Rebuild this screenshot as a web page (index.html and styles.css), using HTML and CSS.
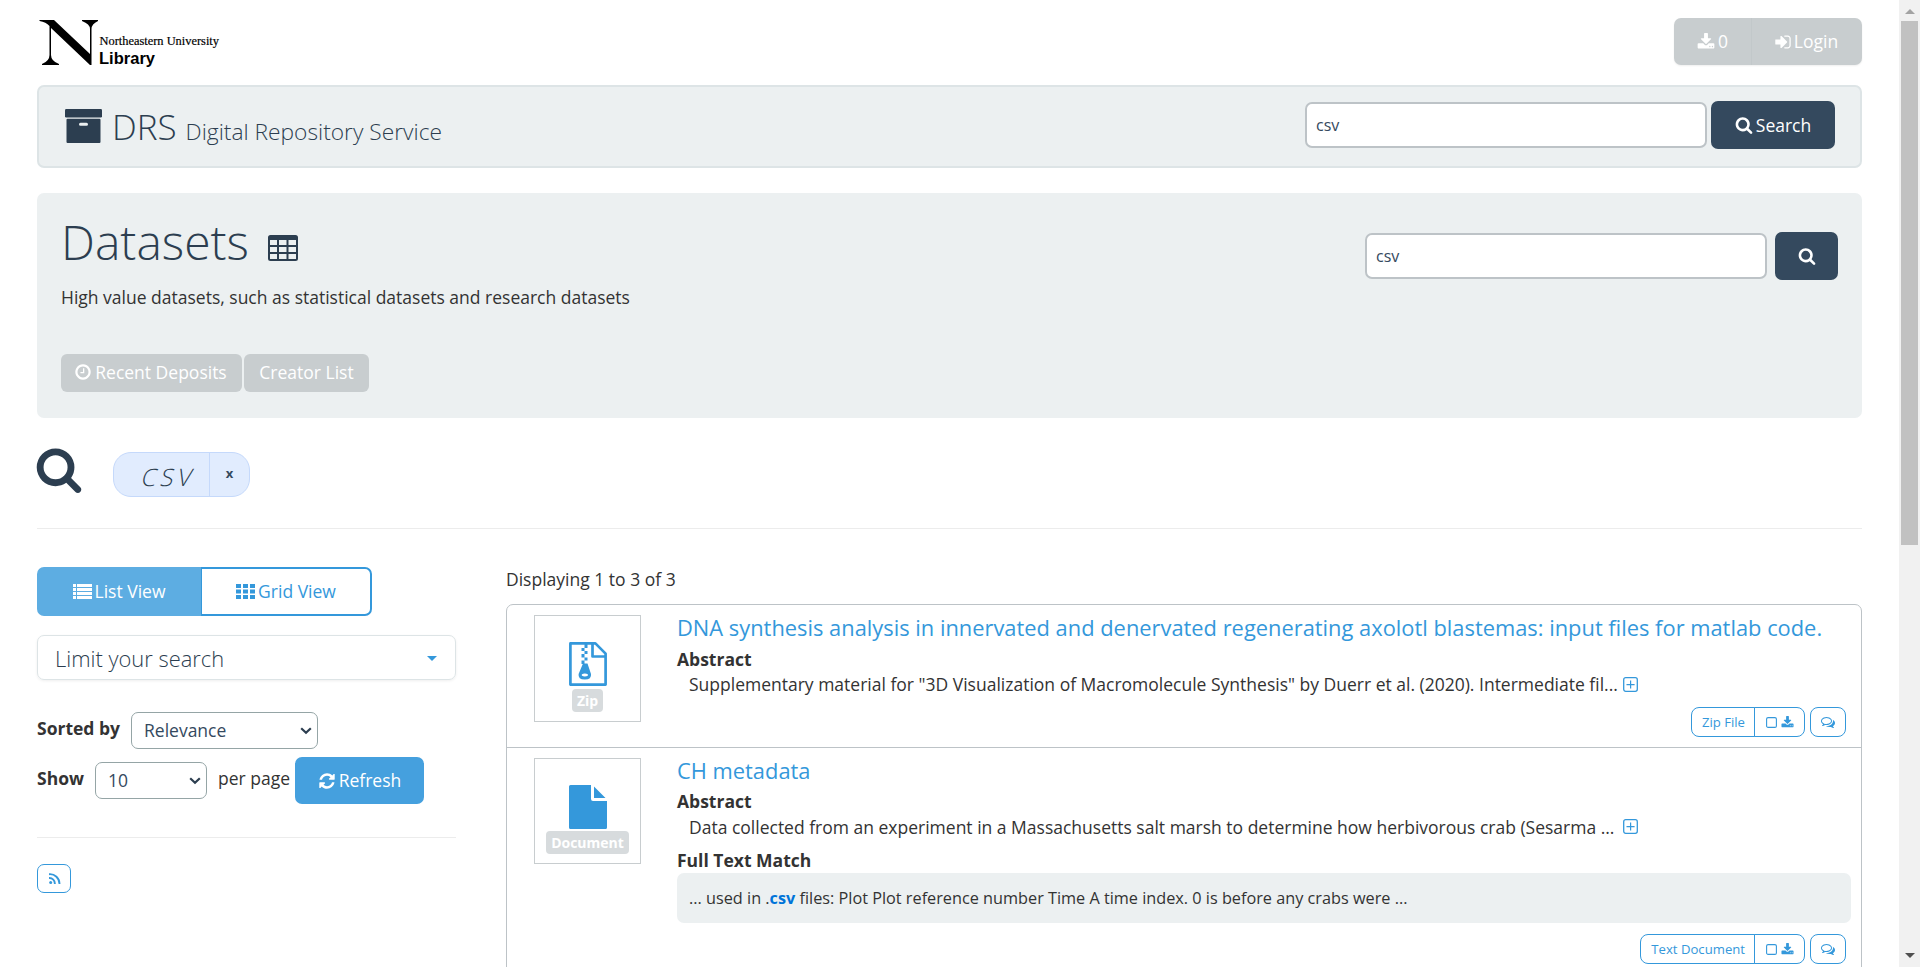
FILE: index.html
```html
<!DOCTYPE html>
<html lang="en">
<head>
<meta charset="utf-8">
<title>Datasets - DRS</title>
<link rel="stylesheet" href="styles.css">
</head>
<body>
<svg class="defs" width="0" height="0">
  <symbol id="search" viewBox="0 0 1792 1792"><path d="M1216 832q0-185-131.500-316.500t-316.500-131.500-316.500 131.500-131.500 316.500 131.500 316.500 316.500 131.500 316.500-131.500 131.500-316.500zm512 832q0 52-38 90t-90 38q-54 0-90-38l-343-342q-179 124-399 124-143 0-273.500-55.500t-225-150-150-225-55.500-273.500 55.500-273.500 150-225 225-150 273.500-55.500 273.500 55.500 225 150 150 225 55.500 273.500q0 220-124 399l343 343q37 37 37 90z"/></symbol>
  <symbol id="download" viewBox="0 0 1792 1792"><path d="M1344 1344q0-26-19-45t-45-19-45 19-19 45 19 45 45 19 45-19 19-45zm256 0q0-26-19-45t-45-19-45 19-19 45 19 45 45 19 45-19 19-45zm128-224v320q0 40-28 68t-68 28h-1472q-40 0-68-28t-28-68v-320q0-40 28-68t68-28h465l135 136q58 56 136 56t136-56l136-136h464q40 0 68 28t28 68zm-325-569q17 41-14 70l-448 448q-18 19-45 19t-45-19l-448-448q-31-29-14-70 17-39 59-39h256v-448q0-26 19-45t45-19h256q26 0 45 19t19 45v448h256q42 0 59 39z"/></symbol>
  <symbol id="signin" viewBox="0 0 1792 1792"><path d="M1312 896q0 26-19 45l-544 544q-19 19-45 19t-45-19-19-45v-288h-448q-26 0-45-19t-19-45v-384q0-26 19-45t45-19h448v-288q0-26 19-45t45-19 45 19l544 544q19 19 19 45zm352-352v704q0 119-84.500 203.500t-203.500 84.500h-320q-13 0-22.500-9.500t-9.500-22.500q0-4-1-20t-.5-26.500 3-23.500 10-19.500 20.500-6.500h320q66 0 113-47t47-113v-704q0-66-47-113t-113-47h-312l-11.500-1-11.500-3-8-5.500-7-9-2-13.500q0-4-1-20t-.5-26.500 3-23.500 10-19.500 20.500-6.500h320q119 0 203.500 84.500t84.500 203.500z"/></symbol>
  <symbol id="clock" viewBox="0 0 1792 1792"><path d="M1024 544v448q0 14-9 23t-23 9h-320q-14 0-23-9t-9-23v-64q0-14 9-23t23-9h224v-352q0-14 9-23t23-9h64q14 0 23 9t9 23zm416 352q0-148-73-273t-198-198-273-73-273 73-198 198-73 273 73 273 198 198 273 73 273-73 198-198 73-273zm224 0q0 209-103 385.500t-279.500 279.500-385.500 103-385.500-103-279.500-279.500-103-385.500 103-385.500 279.500-279.500 385.500-103 385.500 103 279.500 279.500 103 385.500z"/></symbol>
  <symbol id="refresh" viewBox="0 0 1792 1792"><path d="M1639 1056q0 5-1 7-64 268-268 434.500t-478 166.500q-146 0-282.500-55t-243.500-157l-129 129q-19 19-45 19t-45-19-19-45v-448q0-26 19-45t45-19h448q26 0 45 19t19 45-19 45l-137 137q71 66 161 102t187 36q134 0 250-65t186-179q11-17 53-117 8-23 30-23h192q13 0 22.500 9.500t9.500 22.500zm25-800v448q0 26-19 45t-45 19h-448q-26 0-45-19t-19-45 19-45l138-138q-148-137-349-137-134 0-250 65t-186 179q-11 17-53 117-8 23-30 23h-199q-13 0-22.500-9.500t-9.500-22.500v-7q65-268 270-434.500t480-166.500q146 0 284 55.500t245 156.500l130-129q19-19 45-19t45 19 19 45z"/></symbol>
  <symbol id="comments" viewBox="0 0 1792 1792"><path d="M704 384q-153 0-286 52t-211.500 141-78.500 191q0 82 53 158t149 132l97 56-35 84q34-20 62-39l44-31 53 10q78 14 153 14 153 0 286-52t211.500-141 78.500-191-78.500-191-211.500-141-286-52zm0-128q191 0 353.500 68.500t256.500 186.500 94 257-94 257-256.500 186.500-353.500 68.500q-86 0-176-16-124 88-278 128-36 9-86 16h-3q-11 0-20.500-8t-11.500-21q-1-3-1-6.500t.5-6.500 2-6l2.500-5 3.500-5.500 4-5 4.500-5 4-4.500q5-6 23-25t26-29.500 22.500-29 25-38.500 20.500-44q-124-72-195-177t-71-224q0-139 94-257t256.500-186.500 353.500-68.500zm822 1169q10 24 20.500 44t25 38.500 22.500 29 26 29.500 23 25q1 1 4 4.500t4.500 5 4 5 3.500 5.500l2.500 5 2 6 .5 6.500-1 6.500q-3 14-13 22t-22 7q-50-7-86-16-154-40-278-128-90 16-176 16-271 0-472-132 58 4 88 4 161 0 309-45t264-129q125-92 192-212t67-254q0-77-23-152 129 71 204 178t75 230q0 120-71 224.500t-195 176.500z"/></symbol>
  <symbol id="box" viewBox="0 0 11 13"><rect x=".6" y="1.600" width="9.800" height="9.800" rx="1.500" fill="none" stroke="currentColor" stroke-width="1.100"/></symbol>
  <symbol id="plus" viewBox="0 0 15 15"><rect x=".7" y=".7" width="13.600" height="13.600" rx="2" fill="none" stroke="currentColor" stroke-width="1.300"/><path d="M7 3.500h1.200V7h3.400v1.200H8.200v3.400H7V8.200H3.500V7H7z"/></symbol>
</svg>
<div class="page">
  <header class="top">
    <svg class="logo" width="190" height="50" viewBox="0 0 190 50" role="img" aria-label="Northeastern University Library">
      <path d="M2.500 2H17L53 36V11Q53 6 45 3V2H61V3Q54.500 6 54.500 11V47H53L14 10V37Q14 43 22 46V47H5V46Q12.500 43 12.500 37V8Q9 4 2.500 3z"/>
      <text class="logo-uni" x="62.500" y="27" textLength="119.500" lengthAdjust="spacingAndGlyphs">Northeastern University</text>
      <text class="logo-lib" x="62" y="46" textLength="56" lengthAdjust="spacingAndGlyphs">Library</text>
    </svg>
    <div class="account">
      <a class="acc-count"><svg class="i18"><use href="#download"/></svg>0</a>
      <a class="acc-login"><svg class="i18"><use href="#signin"/></svg>Login</a>
    </div>
  </header>

  <nav class="brandbar">
    <svg class="archive" width="37" height="34" viewBox="0 0 37 34"><rect width="37" height="8.500" rx="1.300"/><path fill-rule="evenodd" d="M2.500 9.800h32q1 0 1 1v22q0 1.200-1 1.200h-32q-1 0-1-1.200v-22q0-1 1-1zM15.500 13.700a1.500 1.500 0 0 0 0 3h6a1.500 1.500 0 0 0 0-3z"/></svg>
    <span class="drs">DRS</span><span class="drs-sub">Digital Repository Service</span>
    <form class="bar-search"><input class="field" value="csv"><button class="dark" type="button"><svg class="i18"><use href="#search"/></svg>Search</button></form>
  </nav>

  <section class="hero">
    <div class="hero-main">
      <h1 class="hero-title">Datasets
        <svg class="table-icon" width="30" height="26" viewBox="0 0 30 26"><path fill-rule="evenodd" d="M2.500 0h25q2.500 0 2.500 2.500v21q0 2.500-2.500 2.500h-25Q0 26 0 23.500v-21Q0 0 2.500 0zM2 5v5h7V5zM11 5v5h7.500V5zM20.500 5v5H28V5zM2 12v5h7v-5zM11 12v5h7.500v-5zM20.500 12v5H28v-5zM2 19v5h7v-5zM11 19v5h7.500v-5zM20.500 19v5H28v-5z"/></svg>
      </h1>
      <p class="hero-text">High value datasets, such as statistical datasets and research datasets</p>
      <div class="hero-links"><a class="grey recent"><svg class="i18"><use href="#clock"/></svg>Recent Deposits</a><a class="grey creator">Creator List</a></div>
    </div>
    <form class="hero-search"><input class="field" value="csv"><button class="dark square" type="button" aria-label="Search"><svg class="i18"><use href="#search"/></svg></button></form>
  </section>

  <div class="query">
    <svg class="big-search"><use href="#search"/></svg>
    <div class="pill"><span class="term"><span class="slant">CSV</span></span><a class="remove">x</a></div>
  </div>

  <div class="columns">
    <aside class="side">
      <div class="views">
        <a class="view list"><svg width="19" height="15" viewBox="0 0 19 15"><path d="M0 0h3v3H0zM4 0h15v3H4zM0 4h3v3H0zM4 4h15v3H4zM0 8h3v3H0zM4 8h15v3H4zM0 12h3v3H0zM4 12h15v3H4z"/></svg>List View</a>
        <a class="view grid"><svg width="19" height="15" viewBox="0 0 19 15"><path d="M0 0h5v4H0zM7 0h5v4H7zM14 0h5v4h-5zM0 5.500h5v4H0zM7 5.500h5v4H7zM14 5.500h5v4h-5zM0 11h5v4H0zM7 11h5v4H7zM14 11h5v4h-5z"/></svg>Grid View</a>
      </div>
      <div class="limit">Limit your search<span class="caret"></span></div>
      <div class="sort"><b class="lbl">Sorted by</b><span class="select sel-a">Relevance<svg width="12" height="8" viewBox="0 0 12 8"><path d="M1.200 1.200L6 5.800l4.800-4.600"/></svg></span></div>
      <div class="show"><b class="lbl">Show</b><span class="select sel-b">10<svg width="12" height="8" viewBox="0 0 12 8"><path d="M1.200 1.200L6 5.800l4.800-4.600"/></svg></span><span class="per">per page</span><a class="refresh"><svg class="i18"><use href="#refresh"/></svg>Refresh</a></div>
      <div class="feed"><a class="rss"><svg width="12" height="11" viewBox="0 0 12 11"><circle cx="1.700" cy="9.400" r="1.500"/><path d="M0 5A5.500 5.500 0 0 1 5.800 11M0 1.200A9.600 9.600 0 0 1 10.500 11" fill="none" stroke="currentColor" stroke-width="1.900"/></svg></a></div>
    </aside>

    <main class="results">
      <p class="count">Displaying 1 to 3 of 3</p>
      <div class="list-box">
        <article class="item first">
          <div class="thumb">
            <svg width="38" height="44" viewBox="0 0 38 44"><path d="M1.400 1.400h25l10.200 10.200v31H1.400zM23.500 1.500v13h13" fill="none" stroke="currentColor" stroke-width="2.700" stroke-linejoin="round"/><path d="M15.500 2h3v4h-3zM12.500 6h3v3h-3zM15.500 9h3v3h-3zM12.500 12h3v3.500h-3zM15.500 15.500h3v3h-3zM12.500 18.500h3V22h-3z"/><path fill-rule="evenodd" d="M14 21.500h4.500L22 32q.8 5.500-6.200 5.500T9.600 32zM15.800 31.500a3.200 1.500 0 1 0 .1 0z"/></svg>
            <span class="kind">Zip</span>
          </div>
          <div class="info">
            <h2 class="title">DNA synthesis analysis in innervated and denervated regenerating axolotl blastemas: input files for matlab code.</h2>
            <b class="head">Abstract</b>
            <p class="text">Supplementary material for "3D Visualization of Macromolecule Synthesis" by Duerr et al. (2020). Intermediate fil...<svg class="plus"><use href="#plus"/></svg></p>
            <div class="actions"><a class="mini left">Zip File</a><a class="mini right"><svg class="i-box"><use href="#box"/></svg><svg class="i13"><use href="#download"/></svg></a><a class="mini chat"><svg class="i14"><use href="#comments"/></svg></a></div>
          </div>
        </article>
        <article class="item second">
          <div class="thumb">
            <svg width="38" height="44" viewBox="0 0 38 44"><path d="M1.500 0H22v14q0 2 2 2h14v26.500q0 1.500-1.500 1.500h-35Q0 44 0 42.500v-41Q0 0 1.500 0zM25 1.500L36.500 13H25z"/></svg>
            <span class="kind">Document</span>
          </div>
          <div class="info">
            <h2 class="title">CH metadata</h2>
            <b class="head">Abstract</b>
            <p class="text">Data collected from an experiment in a Massachusetts salt marsh to determine how herbivorous crab (Sesarma ...<svg class="plus"><use href="#plus"/></svg></p>
            <b class="head">Full Text Match</b>
            <div class="match">... used in .<b class="hit">csv</b> files: Plot Plot reference number Time A time index. 0 is before any crabs were ...</div>
            <div class="actions"><a class="mini left">Text Document</a><a class="mini right"><svg class="i-box"><use href="#box"/></svg><svg class="i13"><use href="#download"/></svg></a><a class="mini chat"><svg class="i14"><use href="#comments"/></svg></a></div>
          </div>
        </article>
      </div>
    </main>
  </div>
</div>
<div class="scrollbar"><span class="up"></span><span class="track"></span><span class="down"></span></div>
</body>
</html>
```
FILE: styles.css
```css
* { box-sizing: border-box; }
html, body { height: 100%; }
body { margin: 0; display: flex; height: 967px; overflow: hidden; background: #fff; color: #333; font: 17.5px/25px "Open Sans", sans-serif; }
svg { fill: currentColor; flex: none; }
h1, h2, p { margin: 0; font-weight: normal; }
.defs { position: absolute; }
.i18 { width: 18px; height: 18px; margin-right: 3px; }
.i13 { width: 13px; height: 13px; }
.i-box { width: 11px; height: 13px; }
.i14 { width: 14px; height: 14px; }
.page { flex: 1; height: 967px; overflow: hidden; padding: 0 37px; }

.top { display: flex; justify-content: space-between; align-items: flex-start; height: 85px; padding-top: 18px; }
.logo { color: #000; }
.logo-uni { font: 12.5px "Liberation Serif", serif; stroke: #000; stroke-width: .2px; }
.logo-lib { font: bold 17px "Liberation Sans", sans-serif; }
.account { display: flex; height: 47px; width: 188px; border-radius: 7px; background: #c8cdcf; color: #fff; box-shadow: 0 1px 2px #0001; }
.account a { display: flex; align-items: center; justify-content: center; }
.acc-count { width: 78px; border-right: 1px solid #c2c8ca; }
.acc-login { flex: 1; padding-right: 2px; }
.acc-login .i18 { margin-right: 2px; }

.brandbar { display: flex; align-items: center; height: 83px; padding: 0 25px 3px 26px; border: 2px solid #dde4e6; border-radius: 7px; background: #ecf0f1; color: #2c3e50; }
.archive { margin-top: 2px; }
.drs { margin: 3px 0 0 10px; font-size: 35px; font-weight: 300; }
.drs-sub { margin: 12px 0 0 9px; font-size: 22.75px; font-weight: 300; }
.bar-search { display: flex; align-items: flex-start; gap: 4px; margin-left: auto; }
.field { width: 402px; height: 46px; margin-top: 1px; padding: 0 9px 1px; border: 2px solid #bdc3c7; border-radius: 7px; background: #fff; color: #34495e; font: 16px "Open Sans", sans-serif; }
.dark { display: flex; align-items: center; justify-content: center; width: 124px; height: 48px; padding: 0; border: 0; border-radius: 7px; background: #34495e; color: #fff; font: 17.5px "Open Sans", sans-serif; }
.square { width: 63px; }
.square .i18 { margin: 0; }

.hero { display: flex; justify-content: space-between; height: 225px; margin-top: 25px; padding: 23px 24px 0; border-radius: 7px; background: #ecf0f1; }
.hero-title { display: flex; align-items: center; height: 52px; gap: 19px; color: #2c3e50; font-size: 48px; font-weight: 300; line-height: 52px; }
.table-icon { margin-top: 12px; }
.hero-text { margin-top: 17px; }
.hero-links { display: flex; gap: 2px; margin-top: 44px; }
.grey { display: flex; align-items: center; justify-content: center; height: 38px; padding-bottom: 2px; border-radius: 6px; background: #c8cdcf; color: #fff; }
.recent { width: 181px; padding-right: 2px; }
.creator { width: 125px; }
.hero-search { display: flex; align-items: flex-start; gap: 8px; height: 48px; margin-top: 16px; }

.query { display: flex; align-items: flex-start; gap: 30px; height: 111px; padding-top: 30px; border-bottom: 1px solid #ececec; }
.big-search { width: 48px; height: 48px; margin: -3px 0 0 -2px; color: #2c3e50; }
.pill { display: flex; width: 137px; height: 45px; margin-top: 4px; border: 1px solid #c5d9fb; border-radius: 18px; background: #e1ecfe; }
.term { width: 96px; padding: 8px 0 0 26px; border-right: 1px solid #c5d9fb; color: #2c3e50; font-size: 24px; font-weight: 300; line-height: 32px; letter-spacing: 4px; }
.slant { display: block; transform: skewX(-14deg); transform-origin: 0 25px; }
.remove { flex: 1; padding-top: 8px; color: #34495e; font-size: 13px; font-weight: bold; text-align: center; }

.columns { display: flex; gap: 50px; }
.side { width: 419px; padding-top: 38px; }
.views { display: flex; width: 335px; height: 49px; }
.view { display: flex; align-items: center; justify-content: center; gap: 3px; }
.list { width: 164px; border-radius: 7px 0 0 7px; background: #5dade2; color: #fff; }
.grid { flex: 1; border: 2px solid #3498db; border-left-width: 1px; border-radius: 0 7px 7px 0; color: #3498db; }
.limit { display: flex; align-items: center; justify-content: space-between; height: 45px; margin-top: 19px; padding: 1px 18px 0 17px; border: 1px solid #dde4e6; border-radius: 7px; box-shadow: 0 1px 3px #0001; color: #2c3e50; font-size: 21.9px; font-weight: 300; }
.caret { border: 5px solid transparent; border-top-color: #3498db; border-bottom: 0; }
.sort { display: flex; height: 37px; margin-top: 32px; }
.show { display: flex; height: 50px; margin-top: 8px; }
.lbl { padding-top: 4px; margin-right: 11px; }
.select { display: flex; align-items: center; justify-content: space-between; height: 37px; padding: 0 5px 0 12px; border: 1px solid #95a5a6; border-radius: 7px; color: #34495e; }
.select svg { fill: none; stroke: #2c3e50; stroke-width: 2.200; }
.sel-a { width: 187px; }
.sel-b { width: 112px; margin-top: 5px; }
.show .lbl { padding-top: 9px; }
.per { width: 77px; margin-left: 11px; padding-top: 9px; }
.refresh { display: flex; align-items: center; justify-content: center; width: 129px; height: 47px; border-radius: 7px; background: #45a0de; color: #fff; }
.feed { margin-top: 30px; padding-top: 26px; border-top: 1px solid #ececec; }
.rss { display: flex; align-items: center; justify-content: center; width: 34px; height: 29px; padding-left: 1px; border: 1px solid #3498db; border-radius: 7px; color: #3498db; }

.results { flex: 1; min-width: 0; padding-top: 38px; }
.count { height: 37px; line-height: 25px; }
.list-box { border: 1px solid #bdc3c7; border-radius: 7px 7px 0 0; height: 420px; }
.item { display: flex; padding: 10px 10px 0 27px; }
.first { height: 143px; border-bottom: 1px solid #bdc3c7; }
.thumb { flex: none; display: flex; flex-direction: column; align-items: center; width: 107px; height: 107px; margin-right: 36px; padding-top: 26px; border: 1px solid #c8cdcf; color: #3498db; }
.kind { height: 23px; margin-top: 3px; padding: 0 5px; border-radius: 4px; background: #d7dbdd; color: #fff; font-size: 14px; font-weight: bold; line-height: 23px; }
.second .thumb { height: 106px; }
.second .kind { margin-top: 2px; }
.info { flex: 1; min-width: 0; }
.title { height: 31px; color: #3498db; font-size: 21.875px; line-height: 26px; white-space: nowrap; }
.head { display: block; height: 25px; line-height: 26px; }
.text { display: flex; align-items: center; gap: 5px; height: 26px; padding-left: 12px; white-space: nowrap; }
.plus { width: 15px; height: 15px; color: #3498db; }
.actions { display: flex; justify-content: flex-end; height: 30px; padding-right: 5px; margin-top: 10px; }
.mini { display: flex; align-items: center; justify-content: center; border: 1px solid #3498db; color: #3498db; font-size: 13.15px; }
.left { padding: 0 9px 0 10px; border-radius: 8px 0 0 8px; }
.right { width: 51px; gap: 4px; margin-left: -1px; border-radius: 0 8px 8px 0; }
.chat { width: 36px; margin-left: 5px; border-radius: 8px; }
.second .title { height: 30px; }
.second .text { height: 33px; padding-bottom: 7px; gap: 9px; }
.second .plus { margin-top: -2px; }
.second .head { height: 26px; }
.match { height: 50px; padding: 0 12px; border-radius: 7px; background: #ecf0f1; font-size: 16.25px; line-height: 50px; }
.second .actions { margin-top: 11px; }
.hit { color: #0074d9; }

.scrollbar { width: 21px; height: 967px; padding: 9px 2px; display: flex; flex-direction: column; align-items: center; background: #f1f1f1; }
.up { border: 5px solid transparent; border-bottom-color: #a3a3a3; border-top: 0; }
.track { width: 17px; height: 524px; margin-top: 7px; background: #c1c1c1; }
.down { margin-top: auto; border: 5px solid transparent; border-top-color: #505050; border-bottom: 0; }
```
